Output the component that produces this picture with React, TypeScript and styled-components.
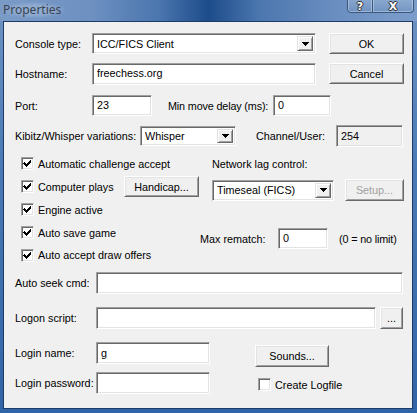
import React from 'react';
import styled, { createGlobalStyle } from "styled-components";

const GlobalStyle = createGlobalStyle`
  html, body{
    margin: 0;
    padding: 0;
    background: #2f64a6;
  }
  body{
    font-family: "Liberation Sans", Arial, sans-serif;
    font-size: 10.8px;
    color: #000;
  }
`;

const Window = styled.div`
  width: 417px;
  height: 413px;
  display: flex;
  flex-direction: column;
  overflow: hidden;
  background: linear-gradient(180deg, #6f93c3 0%, #4a7ab5 40%, #2f64a6 100%);
`;

const TitleBar = styled.div`
  height: 21px;
  flex: none;
  display: flex;
  justify-content: space-between;
  align-items: flex-start;
  background: linear-gradient(90deg, #7b9bc7 0%, #6d90c1 22%, #4b76ae 38%, #1d4c8b 50%, #4b76ae 62%, #6a8ec0 80%, #7c9dca 100%);
`;

const Title = styled.span`
  margin: 2px 0 0 3px;
  font-family: "Noto Sans", "Open Sans", sans-serif;
  font-size: 12px;
  line-height: 16px;
  color: #3a4452;
  padding: 0 4px 0 0;
  border-radius: 8px;
  background: radial-gradient(ellipse at center, rgba(160,185,216,0.6) 40%, rgba(160,185,216,0) 75%);
`;

const CaptionButtons = styled.div`
  display: flex;
  margin-right: 3px;
  margin-top: -2px;
`;

const CaptionButton = styled.div<{ $w: number; $left?: boolean }>`
  width: ${p => p.$w}px;
  height: 15px;
  box-sizing: border-box;
  display: flex;
  align-items: center;
  justify-content: center;
  border: 1px solid #3b587c;
  border-left-width: ${p => (p.$left ? 1 : 0)}px;
  border-radius: ${p => (p.$left ? "0 0 0 4px" : "0 0 4px 0")};
  box-shadow: inset 0 0 0 1px rgba(210,225,242,0.45);
  background: linear-gradient(180deg, rgba(160,185,215,0.55), rgba(110,145,190,0.55));
  color: #fff;
  font-family: "DejaVu Sans", sans-serif;
  font-weight: bold;
  font-size: 11px;
  line-height: 11px;
  padding-top: 1px;
  text-shadow: 0 0 1px #222, 1px 0 0 #333, -1px 0 0 #333, 0 1px 0 #333, 0 -1px 0 #333;
`;

const Client = styled.div`
  flex: 1;
  margin: 0 4px 4px 3px;
  box-sizing: border-box;
  border: 1px solid #1c3b66;
  background: #f0f0f0;
  padding: 11px 0 0 11px;
  display: flex;
  flex-direction: column;
`;

const Row = styled.div<{ $mt?: number; $h: number; $pl?: number }>`
  display: flex;
  align-items: center;
  height: ${p => p.$h}px;
  margin-top: ${p => p.$mt ?? 0}px;
  padding-left: ${p => p.$pl ?? 0}px;
  white-space: nowrap;
`;

const Label = styled.span<{ $w?: number; $ml?: number; $tight?: boolean }>`
  width: ${p => (p.$w ? `${p.$w}px` : "auto")};
  margin-left: ${p => p.$ml ?? 0}px;
  letter-spacing: ${p => (p.$tight ? "-0.15px" : "normal")};
  flex: none;
  white-space: nowrap;
`;

const sunken = `
  box-sizing: border-box;
  border: 1px solid;
  border-color: #a0a0a0 #fff #fff #a0a0a0;
  box-shadow: inset 1px 1px 0 #696969, inset -1px -1px 0 #e3e3e3;
`;

const Field = styled.div<{ $w: number; $h: number; $ro?: boolean }>`
  ${sunken}
  width: ${p => p.$w}px;
  height: ${p => p.$h}px;
  flex: none;
  display: flex;
  align-items: center;
  padding: 0 0 1px 4px;
  background: ${p => (p.$ro ? "#f0f0f0" : "#fff")};
`;

const ComboBox = styled.div<{ $w: number; $h: number }>`
  ${sunken}
  width: ${p => p.$w}px;
  height: ${p => p.$h}px;
  flex: none;
  display: flex;
  align-items: center;
  padding: 2px;
  background: #fff;
`;

const ComboText = styled.span`
  flex: 1;
  padding-left: 2px;
`;

const DropButton = styled.div`
  width: 16px;
  align-self: stretch;
  box-sizing: border-box;
  display: flex;
  align-items: center;
  justify-content: center;
  background: #f0f0f0;
  border: 1px solid;
  border-color: #e3e3e3 #696969 #696969 #e3e3e3;
  box-shadow: inset 1px 1px 0 #fff, inset -1px -1px 0 #a0a0a0;
`;

const Button = styled.div<{ $w: number; $h: number; $ml?: number; $mt?: number; $disabled?: boolean }>`
  width: ${p => p.$w}px;
  height: ${p => p.$h}px;
  margin-left: ${p => p.$ml ?? 0}px;
  margin-top: ${p => p.$mt ?? 0}px;
  flex: none;
  box-sizing: border-box;
  display: flex;
  align-items: center;
  justify-content: center;
  background: #f0f0f0;
  border: 1px solid;
  border-color: #fff #696969 #696969 #fff;
  box-shadow: inset 1px 1px 0 #e3e3e3, inset -1px -1px 0 #a0a0a0;
  color: ${p => (p.$disabled ? "#a0a0a0" : "#000")};
`;

const MidSection = styled.div`
  display: grid;
  grid-template-columns: 185px auto;
  margin-top: 5px;
`;

const CheckColumn = styled.div`
  display: flex;
  flex-direction: column;
  padding-left: 6px;
`;

const SideColumn = styled.div`
  display: flex;
  flex-direction: column;
`;

const CheckRow = styled.label<{ $h: number; $mt?: number; $pl?: number }>`
  display: flex;
  align-items: center;
  gap: 4px;
  height: ${p => p.$h}px;
  margin-top: ${p => p.$mt ?? 0}px;
  padding-left: ${p => p.$pl ?? 0}px;
  white-space: nowrap;
`;

const Box = styled.span`
  ${sunken}
  width: 13px;
  height: 13px;
  flex: none;
  background: #fff;
  position: relative;

  svg{
    position: absolute;
    left: -1px;
    top: -1px;
  }
`;

const CheckText = styled.span<{ $w?: number }>`
  width: ${p => (p.$w ? `${p.$w}px` : "auto")};
  flex: none;
`;

const BottomSection = styled.div`
  display: grid;
  grid-template-columns: 240px auto;
  margin-top: 13px;
`;

const Stack = styled.div`
  display: flex;
  flex-direction: column;
`;

const Arrow = () => (
  <svg width="7" height="4" viewBox="0 0 7 4" shapeRendering="crispEdges">
    <path d="M0 0h7v1h-1v1h-1v1h-1v1h-1v-1h-1v-1h-1v-1h-1z" fill="#000" />
  </svg>
);

const Check: React.FC<{ checked?: boolean }> = ({ checked }) => (
  <Box>
    {checked && (
      <svg width="13" height="13" viewBox="0 0 13 13" shapeRendering="crispEdges">
        <path d="M3 5h1v1h1v1h1v-1h1v-1h1v-1h1v-1h1v3h-1v1h-1v1h-1v1h-1v1h-1v-1h-1v-1h-1v-1h-1z" fill="#000" />
      </svg>
    )}
  </Box>
);

const Combo: React.FC<{ w: number; h: number; text: string }> = ({ w, h, text }) => (
  <ComboBox $w={w} $h={h}>
    <ComboText>{text}</ComboText>
    <DropButton><Arrow /></DropButton>
  </ComboBox>
);

const App: React.FC = () => {
  return (
    <>
      <GlobalStyle />
      <Window>
        <TitleBar>
          <Title>Properties</Title>
          <CaptionButtons>
            <CaptionButton $w={26} $left>?</CaptionButton>
            <CaptionButton $w={41}>X</CaptionButton>
          </CaptionButtons>
        </TitleBar>
        <Client>
          <Row $h={21}>
            <Label $w={77}>Console type:</Label>
            <Combo w={224} h={21} text="ICC/FICS Client" />
            <Button $w={75} $h={21} $ml={13}>OK</Button>
          </Row>
          <Row $h={23} $mt={8}>
            <Label $w={77}>Hostname:</Label>
            <Field $w={224} $h={22}>freechess.org</Field>
            <Button $w={75} $h={21} $ml={13}>Cancel</Button>
          </Row>
          <Row $h={21} $mt={10}>
            <Label $w={77}>Port:</Label>
            <Field $w={60} $h={21}>23</Field>
            <Label $w={105} $ml={16} $tight>Min move delay (ms):</Label>
            <Field $w={58} $h={21}>0</Field>
          </Row>
          <Row $h={22} $mt={9}>
            <Label $w={125}>Kibitz/Whisper variations:</Label>
            <Combo w={96} h={20} text="Whisper" />
            <Label $w={80} $ml={20}>Channel/User:</Label>
            <Field $w={67} $h={22} $ro>254</Field>
          </Row>

          <MidSection>
            <CheckColumn>
              <CheckRow $h={23}>
                <Check checked />
                <CheckText>Automatic challenge accept</CheckText>
              </CheckRow>
              <CheckRow $h={23}>
                <Check checked />
                <CheckText $w={82}>Computer plays</CheckText>
                <Button $w={75} $h={21}>Handicap...</Button>
              </CheckRow>
              <CheckRow $h={23}>
                <Check checked />
                <CheckText>Engine active</CheckText>
              </CheckRow>
              <CheckRow $h={23}>
                <Check checked />
                <CheckText>Auto save game</CheckText>
              </CheckRow>
              <CheckRow $h={22}>
                <Check checked />
                <CheckText>Auto accept draw offers</CheckText>
              </CheckRow>
            </CheckColumn>
            <SideColumn>
              <Row $h={23} $pl={12}>
                <Label>Network lag control:</Label>
              </Row>
              <Row $h={22} $mt={4} $pl={12}>
                <Combo w={122} h={21} text="Timeseal (FICS)" />
                <Button $w={59} $h={22} $ml={11} $disabled>Setup...</Button>
              </Row>
              <Row $h={21} $mt={27}>
                <Label $w={78}>Max rematch:</Label>
                <Field $w={50} $h={21}>0</Field>
                <Label $ml={11} $tight>(0 = no limit)</Label>
              </Row>
            </SideColumn>
          </MidSection>

          <Row $h={22} $mt={6}>
            <Label $w={81}>Auto seek cmd:</Label>
            <Field $w={307} $h={22} />
          </Row>
          <Row $h={22} $mt={13}>
            <Label $w={81}>Logon script:</Label>
            <Field $w={280} $h={22} />
            <Button $w={23} $h={22} $ml={4}>...</Button>
          </Row>

          <BottomSection>
            <Stack>
              <Row $h={22}>
                <Label $w={81}>Login name:</Label>
                <Field $w={114} $h={22}>g</Field>
              </Row>
              <Row $h={22} $mt={8}>
                <Label $w={81}>Login password:</Label>
                <Field $w={114} $h={22} />
              </Row>
            </Stack>
            <Stack>
              <Button $w={74} $h={22} $mt={3}>Sounds...</Button>
              <CheckRow $h={13} $mt={11} $pl={3}>
                <Check />
                <CheckText>Create Logfile</CheckText>
              </CheckRow>
            </Stack>
          </BottomSection>
        </Client>
      </Window>
    </>
  );
};

export default App;
